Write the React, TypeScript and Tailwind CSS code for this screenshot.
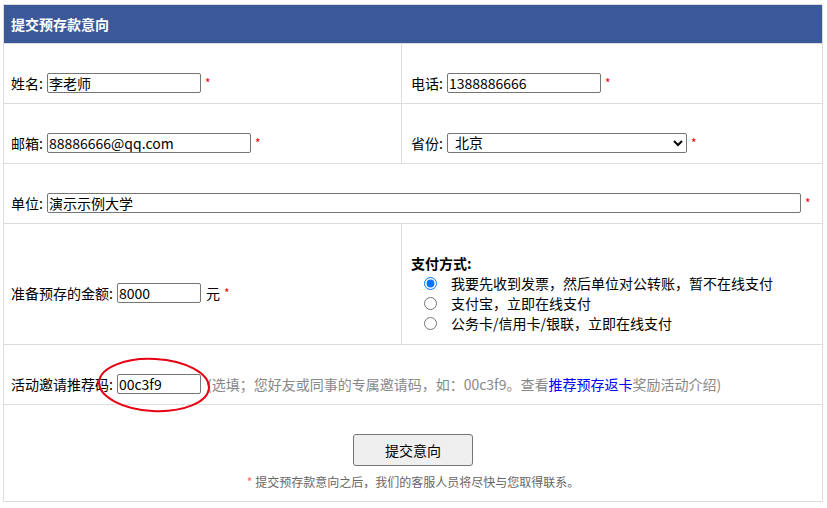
import React from 'react';

const inputCls =
  "h-[20px] border border-[#767676] rounded-[2px] px-[1px] text-[14px] leading-[18px] text-black bg-white outline-none";

function Star() {
  return <span className="ml-[4px] text-[12px] text-[#f00] leading-none">*</span>;
}

function Row({ children }: { children: React.ReactNode }) {
  return <div className="flex border-t border-[#ddd]">{children}</div>;
}

function LeftCell({ children }: { children: React.ReactNode }) {
  return (
    <div className="w-[398px] border-r border-[#ddd] pl-[7px] pt-[29px] pb-[10px]">
      <div className="h-[20px] flex items-center">{children}</div>
    </div>
  );
}

function RightCell({ children }: { children: React.ReactNode }) {
  return (
    <div className="flex-1 pl-[9px] pt-[29px] pb-[10px]">
      <div className="h-[20px] flex items-center">{children}</div>
    </div>
  );
}

const payOptions = [
  "我要先收到发票，然后单位对公转账，暂不在线支付",
  "支付宝，立即在线支付",
  "公务卡/信用卡/银联，立即在线支付",
];

export default function App() {
  return (
    <div className="relative pt-[4px] pl-[3px] font-['Noto_Sans_CJK_SC',sans-serif] text-[14px] text-black">
      <div className="w-[820px] border border-[#ddd]">
        <div className="h-[38px] bg-[#3b5998] pl-[7px] flex items-center text-white font-bold">
          提交预存款意向
        </div>

        <Row>
          <LeftCell>
            <span>姓名:</span>
            <input className={`${inputCls} ml-[4px] w-[154px]`} defaultValue="李老师" />
            <Star />
          </LeftCell>
          <RightCell>
            <span>电话:</span>
            <input className={`${inputCls} ml-[4px] w-[154px]`} defaultValue="1388886666" />
            <Star />
          </RightCell>
        </Row>

        <Row>
          <LeftCell>
            <span>邮箱:</span>
            <input className={`${inputCls} ml-[4px] w-[204px]`} defaultValue="88886666@qq.com" />
            <Star />
          </LeftCell>
          <RightCell>
            <span>省份:</span>
            <select
              className="ml-[4px] w-[240px] h-[20px] border border-[#767676] rounded-[2px] pl-[3px] py-0 text-[14px] leading-[16px] bg-white font-['Liberation_Sans','Noto_Sans_CJK_SC',sans-serif]"
              defaultValue="北京"
            >
              <option>北京</option>
              <option>上海</option>
              <option>广东</option>
            </select>
            <Star />
          </RightCell>
        </Row>

        <Row>
          <div className="flex-1 pl-[7px] pt-[29px] pb-[10px]">
            <div className="h-[20px] flex items-center">
              <span>单位:</span>
              <input className={`${inputCls} ml-[4px] w-[754px]`} defaultValue="演示示例大学" />
              <Star />
            </div>
          </div>
        </Row>

        <Row>
          <div className="w-[398px] border-r border-[#ddd] pl-[7px] pt-[29px] pb-[11px] flex items-center">
            <span>准备预存的金额:</span>
            <input className={`${inputCls} ml-[4px] w-[84px]`} defaultValue="8000" />
            <span className="ml-[5px]">元</span>
            <Star />
          </div>
          <div className="flex-1 pl-[9px] pt-[29px] pb-[11px]">
            <div className="h-[20px] leading-[20px] font-bold">支付方式:</div>
            {payOptions.map((opt, i) => (
              <label key={opt} className="h-[20px] flex items-center">
                <input
                  type="radio"
                  name="pay"
                  defaultChecked={i === 0}
                  className="m-0 ml-[13px] mr-[14px] w-[13px] h-[13px]"
                />
                <span>{opt}</span>
              </label>
            ))}
          </div>
        </Row>

        <Row>
          <div className="flex-1 pl-[7px] pt-[29px] pb-[10px]">
            <div className="h-[20px] flex items-center">
              <span>活动邀请推荐码:</span>
              <input className={`${inputCls} ml-[4px] w-[84px]`} defaultValue="00c3f9" />
              <span className="ml-[6px] text-[#888]">
                (选填；您好友或同事的专属邀请码，如：00c3f9。查看
                <a className="text-[#0000ff]" href="#">推荐预存返卡</a>
                奖励活动介绍)
              </span>
            </div>
          </div>
        </Row>

        <Row>
          <div className="flex-1 flex flex-col items-center pt-[29px] pb-[9px]">
            <button className="w-[120px] h-[32px] border border-[#767676] rounded-[3px] bg-[#efefef] text-[14px] text-black">
              提交意向
            </button>
            <div className="mt-[6px] h-[20px] leading-[20px] text-[12px] text-[#666]">
              <span className="text-[#f66]">*</span> 提交预存款意向之后，我们的客服人员将尽快与您取得联系。
            </div>
          </div>
        </Row>
      </div>

      <svg className="absolute left-[96px] top-[357px]" width="118" height="57" viewBox="0 0 118 57">
        <ellipse
          cx="58"
          cy="28"
          rx="55"
          ry="26"
          fill="none"
          stroke="#e60012"
          strokeWidth="2"
          transform="rotate(3 58 28)"
        />
      </svg>
    </div>
  );
}
